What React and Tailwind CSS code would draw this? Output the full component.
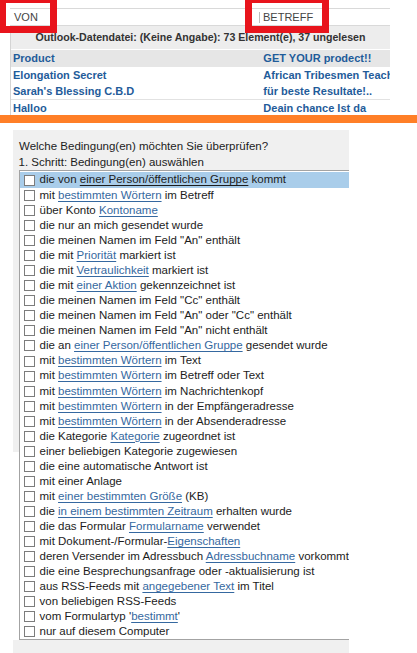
import React from "react";

const L = (text) => ({ link: text });

const conditions = [
  ["die von ", L("einer Person/öffentlichen Gruppe"), " kommt"],
  ["mit ", L("bestimmten Wörtern"), " im Betreff"],
  ["über Konto ", L("Kontoname")],
  ["die nur an mich gesendet wurde"],
  ['die meinen Namen im Feld "An" enthält'],
  ["die mit ", L("Priorität"), " markiert ist"],
  ["die mit ", L("Vertraulichkeit"), " markiert ist"],
  ["die mit ", L("einer Aktion"), " gekennzeichnet ist"],
  ['die meinen Namen im Feld "Cc" enthält'],
  ['die meinen Namen im Feld "An" oder "Cc" enthält'],
  ['die meinen Namen im Feld "An" nicht enthält'],
  ["die an ", L("einer Person/öffentlichen Gruppe"), " gesendet wurde"],
  ["mit ", L("bestimmten Wörtern"), " im Text"],
  ["mit ", L("bestimmten Wörtern"), " im Betreff oder Text"],
  ["mit ", L("bestimmten Wörtern"), " im Nachrichtenkopf"],
  ["mit ", L("bestimmten Wörtern"), " in der Empfängeradresse"],
  ["mit ", L("bestimmten Wörtern"), " in der Absenderadresse"],
  ["die Kategorie ", L("Kategorie"), " zugeordnet ist"],
  ["einer beliebigen Kategorie zugewiesen"],
  ["die eine automatische Antwort ist"],
  ["mit einer Anlage"],
  ["mit ", L("einer bestimmten Größe"), " (KB)"],
  ["die ", L("in einem bestimmten Zeitraum"), " erhalten wurde"],
  ["die das Formular ", L("Formularname"), " verwendet"],
  ["mit Dokument-/Formular-", L("Eigenschaften")],
  ["deren Versender im Adressbuch ", L("Adressbuchname"), " vorkommt"],
  ["die eine Besprechungsanfrage oder -aktualisierung ist"],
  ["aus RSS-Feeds mit ", L("angegebener Text"), " im Titel"],
  ["von beliebigen RSS-Feeds"],
  ["vom Formulartyp '", L("bestimmt"), "'"],
  ["nur auf diesem Computer"],
];

const mails = [
  { from: "Product", subject: "GET YOUR prodect!!", shaded: true },
  { from: "Elongation Secret", subject: "African Tribesmen Teach" },
  { from: "Sarah's Blessing C.B.D", subject: "für beste Resultate!..", line: true },
  { from: "Halloo", subject: "Deain chance Ist da" },
];

function ConditionRow({ parts, selected }) {
  return (
    <div
      className={`flex items-center ${selected ? "h-[16px] bg-[#a9cdea]" : "h-[15.05px]"}`}
    >
      <span className="ml-[3.5px] h-[11px] w-[11px] shrink-0 border border-[#7c7c7c] bg-white" />
      <span className="ml-[5px] whitespace-nowrap text-[#1c1c1c]">
        {parts.map((part, i) =>
          typeof part === "string" ? (
            <span key={i}>{part}</span>
          ) : (
            <span
              key={i}
              className={`underline underline-offset-[2px] ${
                selected ? "text-[#1c1c1c]" : "text-[#3568a0]"
              }`}
            >
              {part.link}
            </span>
          ),
        )}
      </span>
    </div>
  );
}

export default function App() {
  return (
    <div className="h-[653px] w-[417px] overflow-hidden bg-white font-['Liberation_Sans',Arial,sans-serif]">
      {/* Outlook list crop */}
      <div className="relative h-[115px] overflow-hidden">
        <div className="ml-[10px] w-[380px] pt-[8px]">
          <div className="flex h-[18px] items-center border-y border-[#d9d9d9] text-[11px] text-[#444]">
            <span className="w-[249px] pl-[4px]">VON</span>
            <span className="h-[11px] w-px bg-[#bdbdbd]" />
            <span className="pl-[3px]">BETREFF</span>
          </div>
          <div className="border-l border-[#d4d4d4]">
            <div className="flex h-[23px] items-center justify-center bg-[#ededed] text-[10.6px] font-bold text-[#333]">
              Outlook-Datendatei: (Keine Angabe): 73 Element(e), 37 ungelesen
            </div>
            <div className="h-px" />
            {mails.map((m) => (
              <div
                key={m.from}
                className={`flex h-[16.5px] items-center text-[11px] font-bold text-[#1f5c9a] ${
                  m.shaded ? "bg-[#e6e6e6]" : ""
                } ${m.line ? "border-b border-[#e2e2e2]" : ""}`}
              >
                <span className="w-[253px] overflow-hidden whitespace-nowrap pl-[2px]">
                  {m.from}
                </span>
                <span className="w-[127px] overflow-hidden whitespace-nowrap">
                  {m.subject}
                </span>
              </div>
            ))}
          </div>
        </div>
        <div className="absolute left-[-1px] top-[-4px] h-[37px] w-[58px] border-[7px] border-[#e8141c]" />
        <div className="absolute left-[245px] top-[-4px] h-[37px] w-[84px] border-[7px] border-[#e8141c]" />
      </div>

      <div className="h-[8px] bg-[#ff7f27]" />

      {/* Rules wizard crop */}
      <div className="flex pt-[7px]">
        <div className="w-[13px] shrink-0" />
        <div className="w-[336px] bg-[#f0f0f0] pt-[8px] text-[11.5px]">
          <div className="pl-[6px] leading-[16px] text-[#1c1c1c]">
            Welche Bedingung(en) möchten Sie überprüfen?
          </div>
          <div className="pl-[5.5px] leading-[16px] text-[#1c1c1c]">
            1. Schritt: Bedingung(en) auswählen
          </div>
          <div className="flex">
            <div className="flex w-[6px] shrink-0 flex-col">
              <div className="h-[282px]" />
              <div className="flex-1 bg-white" />
            </div>
            <div className="flex-1 overflow-hidden border-y border-l border-[#a3a3a3] bg-white pt-[1px]">
              {conditions.map((parts, i) => (
                <ConditionRow key={i} parts={parts} selected={i === 0} />
              ))}
            </div>
          </div>
          <div className="h-[14px]" />
        </div>
      </div>
    </div>
  );
}
